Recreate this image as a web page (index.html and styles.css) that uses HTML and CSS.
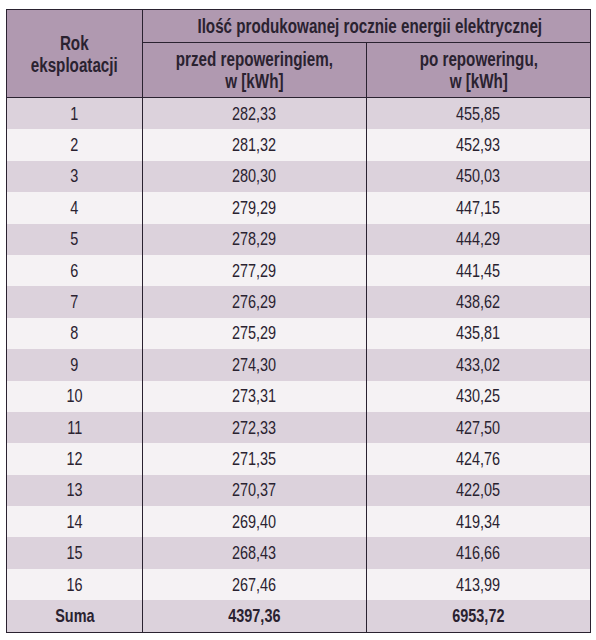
FILE: index.html
```html
<!DOCTYPE html>
<html lang="pl">
<head>
<meta charset="utf-8">
<link rel="stylesheet" href="styles.css">
</head>
<body>
<table class="tbl">
  <colgroup>
    <col class="c1"><col class="c2"><col class="c3">
  </colgroup>
  <thead>
    <tr class="h1">
      <th rowspan="2" class="rok"><span class="t">Rok<br>eksploatacji</span></th>
      <th colspan="2"><span class="t">Ilość produkowanej rocznie energii elektrycznej</span></th>
    </tr>
    <tr class="h2">
      <th><span class="t">przed repoweringiem,<br>w [kWh]</span></th>
      <th><span class="t">po repoweringu,<br>w [kWh]</span></th>
    </tr>
  </thead>
  <tbody>
    <tr class="odd"><td><span class="t">1</span></td><td><span class="t">282,33</span></td><td><span class="t">455,85</span></td></tr>
    <tr class="even"><td><span class="t">2</span></td><td><span class="t">281,32</span></td><td><span class="t">452,93</span></td></tr>
    <tr class="odd"><td><span class="t">3</span></td><td><span class="t">280,30</span></td><td><span class="t">450,03</span></td></tr>
    <tr class="even"><td><span class="t">4</span></td><td><span class="t">279,29</span></td><td><span class="t">447,15</span></td></tr>
    <tr class="odd"><td><span class="t">5</span></td><td><span class="t">278,29</span></td><td><span class="t">444,29</span></td></tr>
    <tr class="even"><td><span class="t">6</span></td><td><span class="t">277,29</span></td><td><span class="t">441,45</span></td></tr>
    <tr class="odd"><td><span class="t">7</span></td><td><span class="t">276,29</span></td><td><span class="t">438,62</span></td></tr>
    <tr class="even"><td><span class="t">8</span></td><td><span class="t">275,29</span></td><td><span class="t">435,81</span></td></tr>
    <tr class="odd"><td><span class="t">9</span></td><td><span class="t">274,30</span></td><td><span class="t">433,02</span></td></tr>
    <tr class="even"><td><span class="t">10</span></td><td><span class="t">273,31</span></td><td><span class="t">430,25</span></td></tr>
    <tr class="odd"><td><span class="t">11</span></td><td><span class="t">272,33</span></td><td><span class="t">427,50</span></td></tr>
    <tr class="even"><td><span class="t">12</span></td><td><span class="t">271,35</span></td><td><span class="t">424,76</span></td></tr>
    <tr class="odd"><td><span class="t">13</span></td><td><span class="t">270,37</span></td><td><span class="t">422,05</span></td></tr>
    <tr class="even"><td><span class="t">14</span></td><td><span class="t">269,40</span></td><td><span class="t">419,34</span></td></tr>
    <tr class="odd"><td><span class="t">15</span></td><td><span class="t">268,43</span></td><td><span class="t">416,66</span></td></tr>
    <tr class="even"><td><span class="t">16</span></td><td><span class="t">267,46</span></td><td><span class="t">413,99</span></td></tr>
    <tr class="odd sum"><td><span class="t">Suma</span></td><td><span class="t">4397,36</span></td><td><span class="t">6953,72</span></td></tr>
  </tbody>
</table>
</body>
</html>
```

FILE: styles.css
```css
html, body {
  margin: 0;
  padding: 0;
  background: #ffffff;
}
body {
  padding: 9px 0 0 6px;
  font-family: "Liberation Sans", Arial, sans-serif;
  color: #2a2230;
}
.tbl {
  border-collapse: collapse;
  width: 584px;
  table-layout: fixed;
  border: 1.5px solid #2a2230;
}
.c1 { width: 136px; }
.c2 { width: 224px; }
.c3 { width: 224px; }
.t {
  display: inline-block;
  transform: scaleX(0.76);
  transform-origin: center;
  white-space: nowrap;
}
.tbl th {
  background: #b099b0;
  font-weight: bold;
  font-size: 20px;
  line-height: 22px;
  padding: 0;
  text-align: center;
  vertical-align: middle;
  border-left: 1.5px solid #2a2230;
  border-right: 1.5px solid #2a2230;
  color: #2a2230;
}
.h1 th { height: 32px; border-bottom: 1.5px solid #2a2230; }
.h2 th { height: 54px; border-bottom: 1.5px solid #2a2230; }
.tbl td {
  height: 31.4px;
  padding: 0;
  text-align: center;
  vertical-align: middle;
  font-size: 19px;
  line-height: 20px;
  border-left: 1.5px solid #2a2230;
  border-right: 1.5px solid #2a2230;
}
.odd td { background: #dcd2dc; }
.even td { background: #f5f2f4; }
.sum td { font-weight: bold; }
```
